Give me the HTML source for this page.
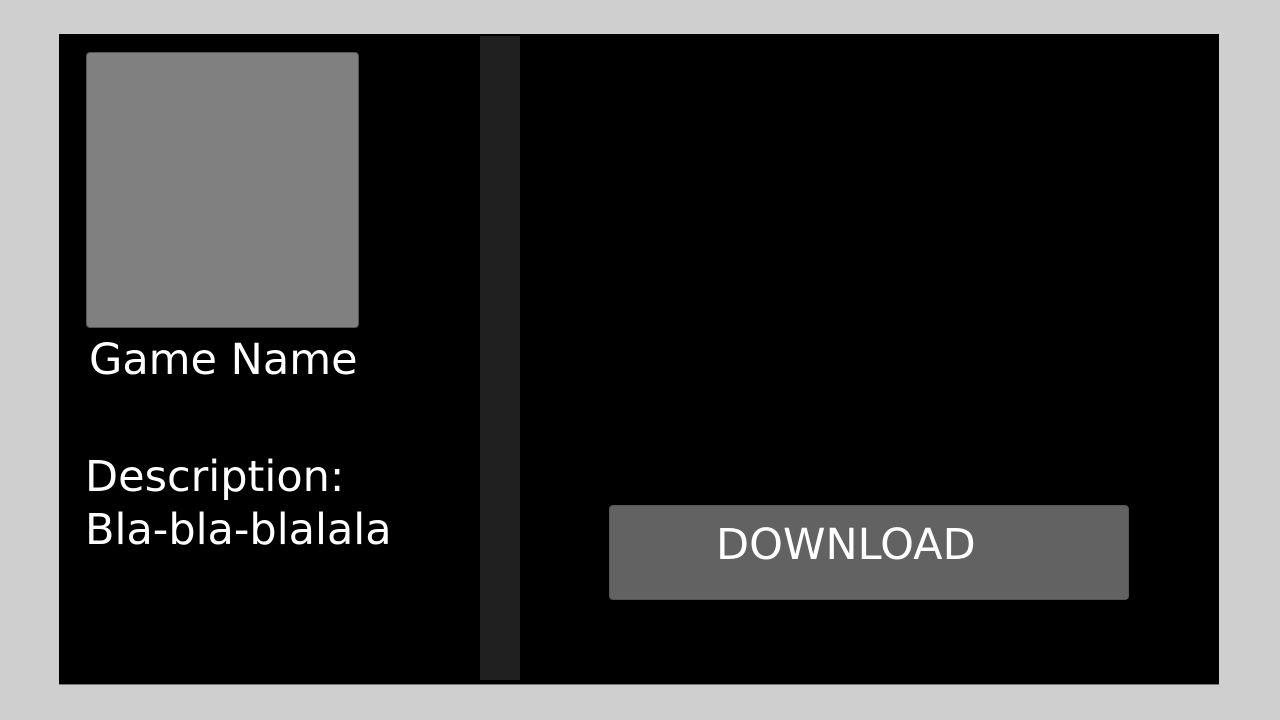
<!DOCTYPE html>
<html><head><style>
body{margin:0;width:1280px;height:720px;background:#cfcfcf;position:relative;overflow:hidden;font-family:"DejaVu Sans","Liberation Sans",sans-serif;color:#fff}
.p{position:absolute;left:59px;top:34px;width:1160px;height:650px;background:#000;border-bottom:1px solid #777}
.img{position:absolute;left:86px;top:52px;width:273px;height:276px;background:#808080;border-radius:4px;border:1px solid #555;box-sizing:border-box}
.bar{position:absolute;left:480px;top:36px;width:40px;height:644px;background:#202020}
.btn{position:absolute;left:609px;top:505px;width:520px;height:95px;background:#626262;border-radius:4px;border:1px solid #555;box-sizing:border-box}
.t{position:absolute;white-space:nowrap;font-size:43px;line-height:1}
</style></head><body>
<div class="p"></div>
<div class="img"></div>
<div class="bar"></div>
<div class="btn"></div>
<div class="t" style="left:89px;top:339px">Game Name</div>
<div class="t" style="left:85px;top:456px">Description:</div>
<div class="t" style="left:85px;top:509px">Bla-bla-blalala</div>
<div class="t" style="left:716px;top:524px">DOWNLOAD</div>
</body></html>
